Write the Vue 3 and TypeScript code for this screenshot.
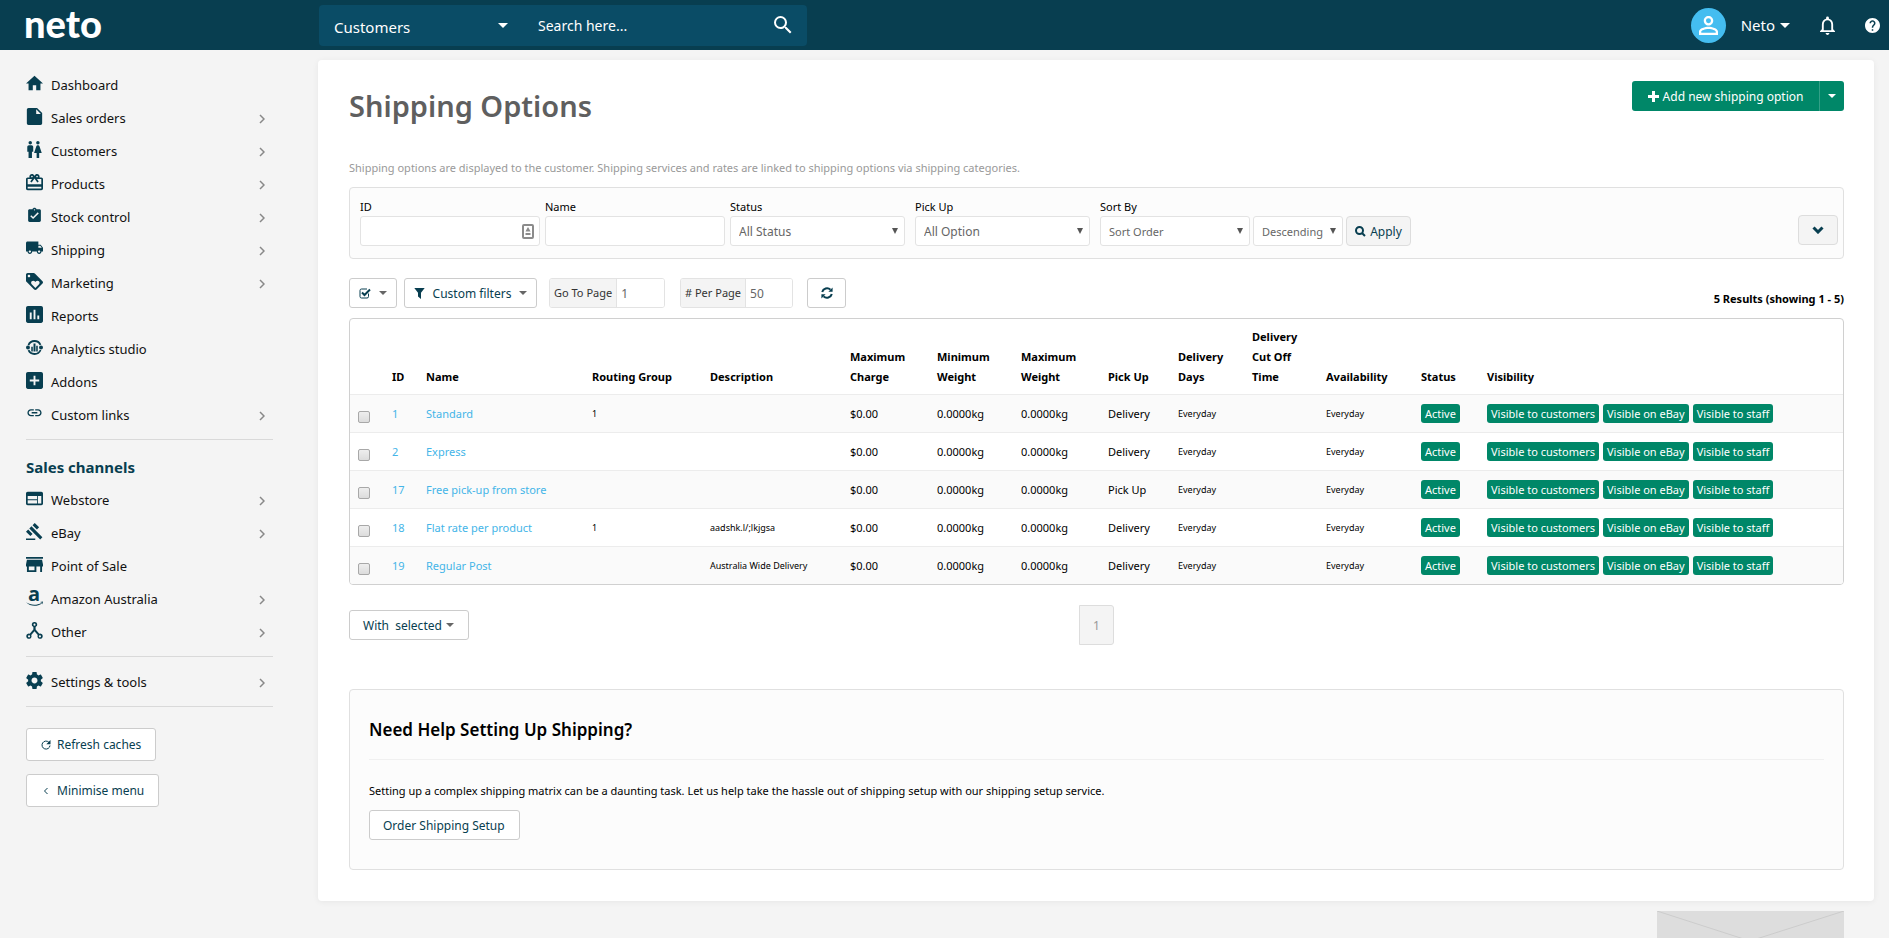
<script setup lang="ts">
import { ref } from 'vue'

interface NavItem {
  label: string
  icon: string
  more: boolean
}

interface ShippingOption {
  id: number
  name: string
  group: string
  description: string
  pickup: string
}

interface IconShape {
  box: string
  d: string
}

const icons: Record<string, IconShape> = {
  home: { box: '2 2 20 20', d: 'M10 20v-6h4v6h5v-8h3L12 3 2 12h3v8z' },
  file: { box: '2 2 20 20', d: 'M5 2C3.9 2 3 2.9 3 4v16c0 1.1.9 2 2 2h14c1.1 0 2-.9 2-2V8l-6-6H5zm9 7V3.5L19.5 9H14z' },
  people: { box: '2.5 2 20 20', d: 'M5.5 22v-7.5H4V9c0-1.1.9-2 2-2h3c1.1 0 2 .9 2 2v5.5H9.5V22h-4zM18 22v-6h3l-2.54-7.63C18.18 7.55 17.42 7 16.56 7h-.12c-.86 0-1.63.55-1.9 1.37L12 16h3v6h3zM7.5 6c1.11 0 2-.89 2-2s-.89-2-2-2-2 .89-2 2 .89 2 2 2zm9 0c1.11 0 2-.89 2-2s-.89-2-2-2-2 .89-2 2 .89 2 2 2z' },
  gift: { box: '2 2 20 20', d: 'M20 6h-2.18c.11-.31.18-.65.18-1 0-1.66-1.34-3-3-3-1.05 0-1.96.54-2.5 1.35l-.5.67-.5-.68C10.96 2.54 10.05 2 9 2 7.34 2 6 3.34 6 5c0 .35.07.69.18 1H4c-1.11 0-1.99.89-1.99 2L2 19c0 1.11.89 2 2 2h16c1.11 0 2-.89 2-2V8c0-1.11-.89-2-2-2zm-5-2c.55 0 1 .45 1 1s-.45 1-1 1-1-.45-1-1 .45-1 1-1zM9 4c.55 0 1 .45 1 1s-.45 1-1 1-1-.45-1-1 .45-1 1-1zm11 15H4v-2h16v2zm0-5H4V8h5.08L7 10.83 8.62 12 11 8.76l1-1.36 1 1.36L15.38 12 17 10.83 14.92 8H20v6z' },
  clipboard: { box: '0 0 24 24', d: 'M19 3h-4.18C14.4 1.84 13.3 1 12 1c-1.3 0-2.4.84-2.82 2H5c-1.1 0-2 .9-2 2v14c0 1.1.9 2 2 2h14c1.1 0 2-.9 2-2V5c0-1.1-.9-2-2-2zm-7 0c.55 0 1 .45 1 1s-.45 1-1 1-1-.45-1-1 .45-1 1-1zm-2 14l-4-4 1.41-1.41L10 14.17l6.59-6.59L18 9l-8 8z' },
  truck: { box: '1 2 22 22', d: 'M20 8h-3V4H3c-1.1 0-2 .9-2 2v11h2c0 1.66 1.34 3 3 3s3-1.34 3-3h6c0 1.66 1.34 3 3 3s3-1.34 3-3h2v-5l-3-4zM6 18.5c-.83 0-1.5-.67-1.5-1.5s.67-1.5 1.5-1.5 1.5.67 1.5 1.5-.67 1.5-1.5 1.5zm13.5-9l1.96 2.5H17V9.5h2.5zm-1.5 9c-.83 0-1.5-.67-1.5-1.5s.67-1.5 1.5-1.5 1.5.67 1.5 1.5-.67 1.5-1.5 1.5z' },
  tag: { box: '2 2 20 20', d: 'M21.41 11.58l-9-9C12.05 2.22 11.55 2 11 2H4c-1.1 0-2 .9-2 2v7c0 .55.22 1.05.59 1.42l9 9c.36.36.86.58 1.41.58.55 0 1.05-.22 1.41-.59l7-7c.37-.36.59-.86.59-1.41 0-.55-.23-1.06-.59-1.42zM5.5 7C4.67 7 4 6.33 4 5.5S4.67 4 5.5 4 7 4.67 7 5.5 6.33 7 5.5 7zm11.77 8.27L13 19.54l-4.27-4.27C8.28 14.81 8 14.19 8 13.5c0-1.38 1.12-2.5 2.5-2.5.69 0 1.32.28 1.77.74l.73.72.73-.73c.45-.45 1.08-.73 1.77-.73 1.38 0 2.5 1.12 2.5 2.5 0 .69-.28 1.32-.73 1.77z' },
  chart: { box: '3 3 18 18', d: 'M19 3H5c-1.1 0-2 .9-2 2v14c0 1.1.9 2 2 2h14c1.1 0 2-.9 2-2V5c0-1.1-.9-2-2-2zM9 17H7v-7h2v7zm4 0h-2V7h2v10zm4 0h-2v-4h2v4z' },
  analytics: { box: '0 0 24 24', d: 'M12 1.5a10.5 10.5 0 0 1 9.6 6.2l-2.4 1A8 8 0 0 0 4.6 9L2.3 8A10.5 10.5 0 0 1 12 1.5zM12 22.5a10.5 10.5 0 0 1-9.6-6.2l2.4-1a8 8 0 0 0 14.6-.3l2.3 1a10.5 10.5 0 0 1-9.7 6.5zM2.8 9.2a2.8 2.8 0 1 1 0 5.6 2.8 2.8 0 0 1 0-5.6zM21.2 9.2a2.8 2.8 0 1 1 0 5.6 2.8 2.8 0 0 1 0-5.6zM7.4 11h2.2v6.8H7.4zM10.6 6.5h2.8v11.3h-2.8zM14.4 9.5h2.2v8.3h-2.2z' },
  plusbox: { box: '3 3 18 18', d: 'M19 3H5c-1.11 0-2 .9-2 2v14c0 1.1.89 2 2 2h14c1.1 0 2-.9 2-2V5c0-1.1-.9-2-2-2zm-2 10h-4v4h-2v-4H7v-2h4V7h2v4h4v2z' },
  link: { box: '0 1 24 24', d: 'M3.9 12c0-1.71 1.39-3.1 3.1-3.1h4V7H7c-2.76 0-5 2.24-5 5s2.24 5 5 5h4v-1.9H7c-1.71 0-3.1-1.39-3.1-3.1zM8 13h8v-2H8v2zm9-6h-4v1.9h4c1.71 0 3.1 1.39 3.1 3.1s-1.39 3.1-3.1 3.1h-4V17h4c2.76 0 5-2.24 5-5s-2.24-5-5-5z' },
  web: { box: '2 2 20 20', d: 'M20 4H4c-1.1 0-1.99.9-1.99 2L2 18c0 1.1.9 2 2 2h16c1.1 0 2-.9 2-2V6c0-1.1-.9-2-2-2zm-5 14H4v-4h11v4zm0-5H4V9h11v4zm5 5h-4V9h4v9z' },
  gavel: { box: '1 1 22 22', d: 'M1 21h12v2H1zM5.245 8.07l2.83-2.827 14.14 14.142-2.828 2.828zM12.317 1l5.657 5.656-2.83 2.83-5.654-5.66zM3.825 9.485l5.657 5.657-2.828 2.828-5.657-5.657z' },
  store: { box: '3 3 18 18', d: 'M21 4H3v2h18V4zm0 10v-2l-1-5H4l-1 5v2h1v6h10v-6h4v6h2v-6h1zm-9 4H6v-4h6v4z' },
  hub: { box: '2 2 20 20', d: 'M12 2a3 3 0 0 1 1.3 5.8v3l4.3 5a3.1 3.1 0 1 1-1.8 1.6L12 13l-3.8 4.4a3.1 3.1 0 1 1-1.8-1.6l4.3-5v-3A3 3 0 0 1 12 2zm0 1.9a1.2 1.2 0 1 0 0 2.4 1.2 1.2 0 0 0 0-2.4zM5.6 17.6a1.3 1.3 0 1 0 0 2.6 1.3 1.3 0 0 0 0-2.6zM18.4 17.6a1.3 1.3 0 1 0 0 2.6 1.3 1.3 0 0 0 0-2.6z' },
  cog: { box: '2 2 20 20', d: 'M19.43 12.98c.04-.32.07-.64.07-.98s-.03-.66-.07-.98l2.11-1.65c.19-.15.24-.42.12-.64l-2-3.46c-.12-.22-.39-.3-.61-.22l-2.49 1c-.52-.4-1.08-.73-1.69-.98l-.38-2.65C14.46 2.18 14.25 2 14 2h-4c-.25 0-.46.18-.49.42l-.38 2.65c-.61.25-1.17.59-1.69.98l-2.49-1c-.23-.09-.49 0-.61.22l-2 3.46c-.13.22-.07.49.12.64l2.11 1.65c-.04.32-.07.65-.07.98s.03.66.07.98l-2.11 1.65c-.19.15-.24.42-.12.64l2 3.46c.12.22.39.3.61.22l2.49-1c.52.4 1.08.73 1.69.98l.38 2.65c.03.24.24.42.49.42h4c.25 0 .46-.18.49-.42l.38-2.65c.61-.25 1.17-.59 1.69-.98l2.49 1c.23.09.49 0 .61-.22l2-3.46c.12-.22.07-.49-.12-.64l-2.11-1.65zM12 15.5c-1.93 0-3.5-1.57-3.5-3.5s1.57-3.5 3.5-3.5 3.5 1.57 3.5 3.5-1.57 3.5-3.5 3.5z' },
}

const groups: { title: string; items: NavItem[] }[] = [
  {
    title: '',
    items: [
      { label: 'Dashboard', icon: 'home', more: false },
      { label: 'Sales orders', icon: 'file', more: true },
      { label: 'Customers', icon: 'people', more: true },
      { label: 'Products', icon: 'gift', more: true },
      { label: 'Stock control', icon: 'clipboard', more: true },
      { label: 'Shipping', icon: 'truck', more: true },
      { label: 'Marketing', icon: 'tag', more: true },
      { label: 'Reports', icon: 'chart', more: false },
      { label: 'Analytics studio', icon: 'analytics', more: false },
      { label: 'Addons', icon: 'plusbox', more: false },
      { label: 'Custom links', icon: 'link', more: true },
    ],
  },
  {
    title: 'Sales channels',
    items: [
      { label: 'Webstore', icon: 'web', more: true },
      { label: 'eBay', icon: 'gavel', more: true },
      { label: 'Point of Sale', icon: 'store', more: false },
      { label: 'Amazon Australia', icon: 'amazon', more: true },
      { label: 'Other', icon: 'hub', more: true },
    ],
  },
  { title: '', items: [{ label: 'Settings & tools', icon: 'cog', more: true }] },
]

const columns: { label: string; cls: string }[] = [
  { label: 'ID', cls: 'c-id' },
  { label: 'Name', cls: 'c-name' },
  { label: 'Routing Group', cls: 'c-group' },
  { label: 'Description', cls: 'c-desc' },
  { label: 'Maximum Charge', cls: 'c-charge' },
  { label: 'Minimum Weight', cls: 'c-min' },
  { label: 'Maximum Weight', cls: 'c-max' },
  { label: 'Pick Up', cls: 'c-pick' },
  { label: 'Delivery Days', cls: 'c-days' },
  { label: 'Delivery Cut Off Time', cls: 'c-cut' },
  { label: 'Availability', cls: 'c-avail' },
  { label: 'Status', cls: 'c-status' },
  { label: 'Visibility', cls: 'c-vis' },
]

const options: ShippingOption[] = [
  { id: 1, name: 'Standard', group: '1', description: '', pickup: 'Delivery' },
  { id: 2, name: 'Express', group: '', description: '', pickup: 'Delivery' },
  { id: 17, name: 'Free pick-up from store', group: '', description: '', pickup: 'Pick Up' },
  { id: 18, name: 'Flat rate per product', group: '1', description: 'aadshk.l/;lkjgsa', pickup: 'Delivery' },
  { id: 19, name: 'Regular Post', group: '', description: 'Australia Wide Delivery', pickup: 'Delivery' },
]

const visibility = ['Visible to customers', 'Visible on eBay', 'Visible to staff']

const selected = ref<number[]>([])
const page = ref('1')
const perPage = ref('50')
</script>

<template>
  <div class="app">
    <header class="topbar">
      <a class="logo" href="#">neto</a>
      <form class="search" @submit.prevent>
        <div class="pick scope">
          <select aria-label="Search in">
            <option>Customers</option>
          </select>
          <svg viewBox="0 0 10 5" class="scope-caret"><path d="M0 0h10L5 5z" /></svg>
        </div>
        <input type="text" placeholder="Search here..." aria-label="Search" />
        <button type="submit" aria-label="Search">
          <svg viewBox="3 3 18 18"><path d="M15.5 14h-.79l-.28-.27A6.47 6.47 0 0 0 16 9.5 6.5 6.5 0 1 0 9.5 16c1.61 0 3.09-.59 4.23-1.57l.27.28v.79l5 4.99L20.49 19l-4.99-5zm-6 0a4.5 4.5 0 1 1 0-9 4.5 4.5 0 0 1 0 9z" /></svg>
        </button>
      </form>
      <div class="account">
        <span class="avatar">
          <svg viewBox="4 4 16 16"><path d="M12 5.9a2.1 2.1 0 1 1 0 4.2 2.1 2.1 0 0 1 0-4.2m0 9c2.97 0 6.1 1.46 6.1 2.1v1.1H5.9V17c0-.64 3.13-2.1 6.1-2.1M12 4C9.79 4 8 5.79 8 8s1.79 4 4 4 4-1.79 4-4-1.79-4-4-4zm0 9c-2.67 0-8 1.34-8 4v3h16v-3c0-2.66-5.33-4-8-4z" /></svg>
        </span>
        <button class="user" type="button">Neto <svg viewBox="0 0 10 5"><path d="M0 0h10L5 5z" /></svg></button>
        <button class="round" type="button" aria-label="Notifications">
          <svg viewBox="4 2 16 20"><path d="M12 22c1.1 0 2-.9 2-2h-4c0 1.1.9 2 2 2zm6-6v-5c0-3.07-1.63-5.64-4.5-6.32V4a1.5 1.5 0 0 0-3 0v.68C7.64 5.36 6 7.92 6 11v5l-2 2v1h16v-1l-2-2zm-2 1H8v-6c0-2.48 1.51-4.5 4-4.5s4 2.02 4 4.5v6z" /></svg>
        </button>
        <button class="round help" type="button" aria-label="Help">
          <svg viewBox="2 2 20 20"><path d="M12 2C6.48 2 2 6.48 2 12s4.48 10 10 10 10-4.48 10-10S17.52 2 12 2zm1 17h-2v-2h2v2zm2.07-7.75l-.9.92C13.45 12.9 13 13.5 13 15h-2v-.5c0-1.1.45-2.1 1.17-2.83l1.24-1.26c.37-.36.59-.86.59-1.41 0-1.1-.9-2-2-2s-2 .9-2 2H8c0-2.21 1.79-4 4-4s4 1.79 4 4c0 .88-.36 1.68-.93 2.25z" /></svg>
        </button>
      </div>
    </header>

    <div class="body">
      <nav class="sidebar">
        <section v-for="(group, g) in groups" :key="g" class="group">
          <h2 v-if="group.title">{{ group.title }}</h2>
          <ul>
            <li v-for="item in group.items" :key="item.label">
              <a href="#">
                <svg v-if="item.icon === 'amazon'" class="nav-icon" viewBox="0 0 17 17">
                  <text x="8" y="12" text-anchor="middle" class="amazon-a">a</text>
                  <path d="M0 13.3c4.6 3 10.6 3.2 15.6.6l.3.5C11 18 4.3 17.6 0 13.3zM14 13l3-.4-.6 3-.5-1.9z" />
                </svg>
                <svg v-else class="nav-icon" :viewBox="icons[item.icon].box"><path fill-rule="evenodd" :d="icons[item.icon].d" /></svg>
                <span>{{ item.label }}</span>
                <svg v-if="item.more" class="nav-more" viewBox="0 0 6 10"><path d="M1 1l4 4-4 4" /></svg>
              </a>
            </li>
          </ul>
        </section>
        <div class="side-buttons">
          <button class="btn" type="button">
            <svg class="ic10" viewBox="0 0 10 10"><path class="line" d="M7.8 2.2A4 4 0 1 0 9 5.5" /><path d="M9.5 0v4.2H5.3z" /></svg>
            Refresh caches
          </button>
          <button class="btn" type="button">
            <svg class="ic10" viewBox="0 0 10 10"><path class="line" d="M6.5 2L3.5 5l3 3" /></svg>
            Minimise menu
          </button>
        </div>
      </nav>

      <div class="content">
        <main class="card">
          <div class="title-row">
            <h1>Shipping Options</h1>
            <div class="split">
              <button type="button" class="add"><svg viewBox="0 0 11 11"><path d="M4 0h3v4h4v3H7v4H4V7H0V4h4z" /></svg>Add new shipping option</button>
              <button type="button" class="drop" aria-label="More actions"><svg class="caret" viewBox="0 0 8 4"><path d="M0 0h8L4 4z" /></svg></button>
            </div>
          </div>
          <p class="intro">Shipping options are displayed to the customer. Shipping services and rates are linked to shipping options via shipping categories.</p>

          <form class="filters" @submit.prevent>
            <div class="field wide">
              <label for="f-id">ID</label>
              <div class="pick">
                <input id="f-id" type="text" />
                <svg class="card-icon" viewBox="0 0 12 15"><rect x="1" y="1" width="10" height="13" rx="1" fill="#fff" stroke="#8b8b8b" stroke-width="2" /><path d="M6 3l1.2 2 1.3 2.500h-5L4.800 5zM3.500 9h5v2h-5z" fill="#8b8b8b" /></svg>
              </div>
            </div>
            <div class="field wide">
              <label for="f-name">Name</label>
              <input id="f-name" type="text" />
            </div>
            <div class="field medium">
              <label for="f-status">Status</label>
              <div class="pick">
                <select id="f-status"><option>All Status</option></select>
                <svg class="tri" viewBox="0 0 6 6"><path d="M0 0h6L3 6z" /></svg>
              </div>
            </div>
            <div class="field medium">
              <label for="f-pick">Pick Up</label>
              <div class="pick">
                <select id="f-pick"><option>All Option</option></select>
                <svg class="tri" viewBox="0 0 6 6"><path d="M0 0h6L3 6z" /></svg>
              </div>
            </div>
            <div class="field">
              <label for="f-sort">Sort By</label>
              <div class="sort">
                <div class="pick order">
                  <select id="f-sort"><option>Sort Order</option></select>
                  <svg class="tri" viewBox="0 0 6 6"><path d="M0 0h6L3 6z" /></svg>
                </div>
                <div class="pick direction">
                  <select aria-label="Sort direction"><option>Descending</option></select>
                  <svg class="tri" viewBox="0 0 6 6"><path d="M0 0h6L3 6z" /></svg>
                </div>
                <button class="apply" type="submit"><svg viewBox="0 0 11 11"><circle cx="4.5" cy="4.5" r="3.5" /><path d="M7.2 7.2L10 10" /></svg>Apply</button>
              </div>
            </div>
            <button class="expand" type="button" aria-label="More filters"><svg viewBox="0 0 12 8"><path d="M1.5 1.5L6 6l4.5-4.5" /></svg></button>
          </form>

          <div class="toolbar">
            <button class="btn check-all" type="button" aria-label="Select">
              <svg class="ic12" viewBox="0 0 12 12"><path class="line" d="M9.5 6.5v3A1.5 1.5 0 0 1 8 11H2.500A1.500 1.500 0 0 1 1 9.500v-6A1.500 1.500 0 0 1 2.500 2H8" /><path class="tick" d="M3 5.500L5.500 8 11 2.500" /></svg>
              <svg class="caret" viewBox="0 0 8 4"><path d="M0 0h8L4 4z" /></svg>
            </button>
            <button class="btn custom" type="button">
              <svg class="ic11" viewBox="0 0 11 11"><path d="M.3 0h10.400L7 4.800V11L4 8.500V4.800z" /></svg>
              Custom filters
              <svg class="caret" viewBox="0 0 8 4"><path d="M0 0h8L4 4z" /></svg>
            </button>
            <div class="addon">
              <label for="t-page">Go To Page</label>
              <input id="t-page" v-model="page" type="text" />
            </div>
            <div class="addon per">
              <label for="t-per"># Per Page</label>
              <input id="t-per" v-model="perPage" type="text" />
            </div>
            <button class="btn reload" type="button" aria-label="Reload">
              <svg class="ic12" viewBox="0 0 12 12"><path class="tick" d="M1.200 5A5 5 0 0 1 9.500 2.600M10.800 7A5 5 0 0 1 2.500 9.400" /><path d="M11.600.6v4.200H7.400zM.4 11.400V7.200h4.200z" /></svg>
            </button>
            <strong class="results">5 Results (showing 1 - 5)</strong>
          </div>

          <div class="table-wrap">
            <table>
              <thead>
                <tr>
                  <th class="c-check"></th>
                  <th v-for="c in columns" :key="c.label" :class="c.cls" scope="col">{{ c.label }}</th>
                </tr>
              </thead>
              <tbody>
                <tr v-for="o in options" :key="o.id">
                  <td class="c-check"><input v-model="selected" type="checkbox" :value="o.id" :aria-label="`Select ${o.name}`" /></td>
                  <td><a href="#">{{ o.id }}</a></td>
                  <td><a href="#">{{ o.name }}</a></td>
                  <td class="small">{{ o.group }}</td>
                  <td class="small">{{ o.description }}</td>
                  <td>$0.00</td>
                  <td>0.0000kg</td>
                  <td>0.0000kg</td>
                  <td>{{ o.pickup }}</td>
                  <td class="small">Everyday</td>
                  <td></td>
                  <td class="small">Everyday</td>
                  <td><span class="badge">Active</span></td>
                  <td><div class="badges"><span v-for="v in visibility" :key="v" class="badge">{{ v }}</span></div></td>
                </tr>
              </tbody>
            </table>
          </div>

          <div class="table-foot">
            <button class="btn with" type="button">With&nbsp; selected <svg class="caret" viewBox="0 0 8 4"><path d="M0 0h8L4 4z" /></svg></button>
            <button class="page" type="button" disabled>1</button>
          </div>

          <section class="help-box">
            <h2>Need Help Setting Up Shipping?</h2>
            <p>Setting up a complex shipping matrix can be a daunting task. Let us help take the hassle out of shipping setup with our shipping setup service.</p>
            <button class="btn" type="button">Order Shipping Setup</button>
          </section>
        </main>
        <svg class="placeholder" viewBox="0 0 187 60" preserveAspectRatio="none"><path d="M0 0l93 30L187 0M0 60l93-30 94 30" /></svg>
      </div>
    </div>
  </div>
</template>

<style>
html,
body {
  margin: 0;
  background: #f4f4f4;
  overflow: hidden;
}
</style>

<style scoped>
.app {
  height: 100vh;
  overflow: hidden;
  display: flex;
  flex-direction: column;
  font-family: "Noto Sans", "Open Sans", sans-serif;
  font-size: 12px;
  color: #000;
}
.app *,
.app *::before {
  box-sizing: border-box;
}
button,
input,
select {
  font-family: inherit;
  font-size: 12px;
  margin: 0;
}
button {
  cursor: pointer;
  padding: 0;
  border: 0;
  background: none;
}
a {
  text-decoration: none;
}
svg {
  display: block;
  flex: none;
  fill: currentColor;
}
.pick {
  display: grid;
  align-items: center;
}
.pick > * {
  grid-area: 1 / 1;
}
.pick > svg {
  justify-self: end;
  pointer-events: none;
}
.pick select {
  appearance: none;
  width: 100%;
}

.topbar {
  flex: none;
  height: 50px;
  display: flex;
  align-items: center;
  background: #083e50;
  color: #fff;
}
.logo {
  width: 319px;
  padding: 0 0 4px 24px;
  font-family: Lato, sans-serif;
  font-weight: 900;
  font-size: 38px;
  line-height: 46px;
  color: #fff;
}
.search {
  display: flex;
  align-items: center;
  width: 488px;
  height: 41px;
  border-radius: 4px;
  background: #0a4c66;
}
.search select,
.search input {
  border: 0;
  background: none;
  color: #fff;
  outline: none;
}
.scope {
  width: 205px;
}
.scope select {
  height: 41px;
  padding: 3px 0 0 15px;
  font-size: 15px;
}
.scope-caret {
  width: 10px;
  height: 5px;
  margin-right: 16px;
}
.search input {
  flex: 1;
  min-width: 0;
  height: 41px;
  padding: 0 14px;
  font-size: 14px;
}
.search input::placeholder {
  color: #fff;
}
.search button {
  color: #fff;
  margin-right: 15px;
}
.search button svg {
  width: 18px;
  height: 18px;
}
.account {
  flex: 1;
  display: flex;
  align-items: center;
  justify-content: flex-end;
  padding-right: 9px;
}
.avatar {
  width: 35px;
  height: 35px;
  border-radius: 50%;
  background: #44bdf0;
  display: grid;
  place-items: center;
}
.avatar svg {
  width: 19px;
  height: 19px;
}
.user {
  display: flex;
  align-items: center;
  gap: 5px;
  margin: 0 30px 0 15px;
  color: #fff;
  font-size: 15px;
}
.user svg {
  width: 10px;
  height: 5px;
}
.round {
  color: #fff;
}
.round svg {
  width: 15px;
  height: 19px;
}
.help {
  margin-left: 30px;
}
.help svg {
  width: 15px;
  height: 15px;
}

.body {
  flex: 1;
  min-height: 0;
  display: flex;
}
.sidebar {
  flex: none;
  width: 318px;
  padding: 10px 45px 0 26px;
}
.group {
  border-bottom: 1px solid #d9d9d9;
  padding: 8px 0;
}
.group h2 {
  margin: 0;
  padding-top: 6px;
  height: 35px;
  font-size: 15px;
  line-height: 26px;
  color: #083e50;
}
.group ul {
  list-style: none;
  margin: 0;
  padding: 0;
}
.group a {
  display: flex;
  align-items: center;
  height: 33px;
  color: #111;
  font-size: 13px;
}
.nav-icon {
  width: 17px;
  height: 17px;
  margin: 0 8px 2px 0;
  color: #083e50;
  overflow: visible;
}
.amazon-a {
  font: 700 20px "Open Sans", sans-serif;
}
.nav-more {
  width: 6px;
  height: 10px;
  margin: 3px 8px 0 auto;
  fill: none;
  stroke: #888;
  stroke-width: 1.5;
}
.side-buttons {
  display: flex;
  flex-direction: column;
  align-items: flex-start;
  gap: 13px;
  padding-top: 21px;
}
.side-buttons .btn {
  height: 33px;
  padding: 0 14px;
}

.btn {
  display: flex;
  align-items: center;
  gap: 6px;
  height: 30px;
  border: 1px solid #ccc;
  border-radius: 3px;
  background: #fff;
  color: #083e50;
  font-size: 12px;
  white-space: nowrap;
}
.ic10 {
  width: 10px;
  height: 10px;
}
.ic11 {
  width: 11px;
  height: 11px;
}
.ic12 {
  width: 12px;
  height: 12px;
}
.line {
  fill: none;
  stroke: currentColor;
}
.tick {
  fill: none;
  stroke: currentColor;
  stroke-width: 2;
}
.caret {
  width: 8px;
  height: 4px;
  color: #666;
}

.content {
  flex: 1;
  min-width: 0;
  padding: 10px 15px 0 0;
}
.card {
  background: #fff;
  border-radius: 4px;
  box-shadow: 0 1px 6px rgba(0, 0, 0, 0.06);
  padding: 21px 30px 31px 31px;
}
.title-row {
  display: flex;
  align-items: flex-start;
  justify-content: space-between;
}
h1 {
  margin: 5px 0 0;
  font-size: 29px;
  line-height: 40px;
  font-weight: 600;
  color: #5f5f5f;
}
.split {
  display: flex;
}
.split button {
  display: flex;
  align-items: center;
  justify-content: center;
  gap: 4px;
  height: 30px;
  background: #008768;
  color: #fff;
}
.add {
  min-width: 187px;
  padding: 0 13px;
  border-radius: 3px 0 0 3px;
}
.add svg {
  width: 11px;
  height: 11px;
}
.drop {
  width: 25px;
  border-left: 1px solid #33a087;
  border-radius: 0 3px 3px 0;
}
.drop .caret {
  color: #fff;
}
.intro {
  margin: 32px 0 9px;
  line-height: 20px;
  font-size: 11px;
  color: #999;
}

.filters {
  display: flex;
  align-items: flex-start;
  padding: 10px 5px 11px 10px;
  height: 72px;
  border: 1px solid #e0e0e0;
  border-radius: 4px;
  background: #fcfcfc;
}
.field {
  margin-right: 5px;
}
.field label {
  display: block;
  font-size: 11px;
  line-height: 18px;
}
.wide {
  width: 180px;
}
.medium {
  width: 175px;
  margin-right: 10px;
}
.field input,
.field select {
  width: 100%;
  height: 30px;
  border: 1px solid #e3e3e3;
  border-radius: 3px;
  background: #fff;
  color: #666;
  padding: 0 8px;
}
.card-icon {
  width: 12px;
  height: 15px;
  margin-right: 6px;
}
.tri {
  width: 6px;
  height: 6px;
  margin-right: 7px;
  color: #555;
}
.sort {
  display: flex;
  gap: 3px;
}
.field .sort select {
  font-size: 11px;
}
.order {
  width: 150px;
}
.direction {
  width: 90px;
}
.apply,
.expand {
  display: flex;
  align-items: center;
  justify-content: center;
  gap: 4px;
  height: 30px;
  border: 1px solid #ddd;
  border-radius: 4px;
  background: #f4f4f4;
  color: #083e50;
}
.apply {
  width: 65px;
}
.apply svg {
  width: 11px;
  height: 11px;
  fill: none;
  stroke: currentColor;
  stroke-width: 2;
}
.expand {
  width: 40px;
  margin: 17px 0 0 auto;
}
.expand svg {
  width: 12px;
  height: 8px;
  fill: none;
  stroke: currentColor;
  stroke-width: 3;
}

.toolbar {
  display: flex;
  align-items: center;
  margin: 19px 0 10px;
}
.check-all {
  width: 48px;
  padding: 0 9px;
  justify-content: space-between;
}
.custom {
  width: 133px;
  margin: 0 12px 0 7px;
  padding: 0 9px;
  justify-content: space-between;
  gap: 0;
}
.addon {
  display: flex;
  width: 116px;
  height: 30px;
  border: 1px solid #e3e3e3;
  border-radius: 3px;
  overflow: hidden;
}
.addon label {
  flex: none;
  padding: 0 4px;
  background: #f4f4f4;
  border-right: 1px solid #e3e3e3;
  color: #333;
  font-size: 11px;
  line-height: 28px;
}
.addon input {
  flex: 1;
  min-width: 0;
  border: 0;
  padding: 0 4px;
  color: #666;
}
.per {
  width: 113px;
  margin: 0 14px 0 15px;
}
.reload {
  width: 39px;
  justify-content: center;
}
.results {
  margin: 11px 0 0 auto;
  font-size: 11px;
  line-height: 18px;
}

.table-wrap {
  border: 1px solid #d0d0d0;
  border-radius: 4px;
  overflow: hidden;
}
table {
  width: 100%;
  table-layout: fixed;
  border-collapse: collapse;
}
th,
td {
  padding: 0 0 0 8px;
  text-align: left;
  font-size: 11px;
  white-space: nowrap;
}
th {
  height: 75px;
  padding-bottom: 7px;
  vertical-align: bottom;
  line-height: 20px;
  font-weight: 700;
  white-space: normal;
}
td {
  height: 38px;
  border-top: 1px solid #ececec;
}
tbody tr:nth-child(odd) {
  background: #fafafa;
}
td a {
  color: #44b5e8;
}
.small {
  font-size: 9px;
}
.c-check { width: 34px; }
.c-id { width: 34px; }
.c-name { width: 166px; }
.c-group { width: 118px; }
.c-desc { width: 140px; }
.c-charge { width: 87px; padding-right: 20px; }
.c-min { width: 84px; padding-right: 20px; }
.c-max { width: 87px; padding-right: 20px; }
.c-pick { width: 70px; }
.c-days { width: 74px; }
.c-cut { width: 74px; padding-right: 10px; }
.c-avail { width: 95px; }
.c-status { width: 66px; }
td input[type="checkbox"] {
  appearance: none;
  display: block;
  width: 12px;
  height: 12px;
  margin-top: 7px;
  border: 1px solid #a8a8a8;
  border-radius: 2px;
  background: linear-gradient(#eee, #dcdcdc);
}
td input[type="checkbox"]:checked {
  background: #083e50;
}
.badges {
  display: flex;
  gap: 4px;
}
.badge {
  display: inline-block;
  padding: 0 4px;
  border-radius: 3px;
  background: #008768;
  color: #fff;
  line-height: 19px;
}

.table-foot {
  display: grid;
  grid-template-columns: 1fr auto 1fr;
  align-items: center;
  margin-top: 20px;
}
.with {
  justify-self: start;
  padding: 0 14px 0 13px;
  gap: 4px;
}
.page {
  width: 35px;
  height: 40px;
  border: 1px solid #ddd;
  border-radius: 0 3px 3px 0;
  background: #f4f4f4;
  color: #999;
}

.help-box {
  margin-top: 44px;
  padding: 27px 19px 29px;
  border: 1px solid #e0e0e0;
  border-radius: 4px;
  background: #fcfcfc;
}
.help-box h2 {
  margin: 0 0 21px;
  padding-bottom: 16px;
  border-bottom: 1px solid #f0f0f0;
  font-size: 17px;
  line-height: 26px;
  font-weight: 600;
}
.help-box p {
  margin: 0 0 9px;
  font-size: 11px;
  line-height: 20px;
}
.help-box .btn {
  padding: 0 14px 0 13px;
}
.placeholder {
  width: 187px;
  height: 60px;
  margin: 10px 30px 0 auto;
  background: #ddd;
  fill: none;
  stroke: #ccc;
}
</style>
